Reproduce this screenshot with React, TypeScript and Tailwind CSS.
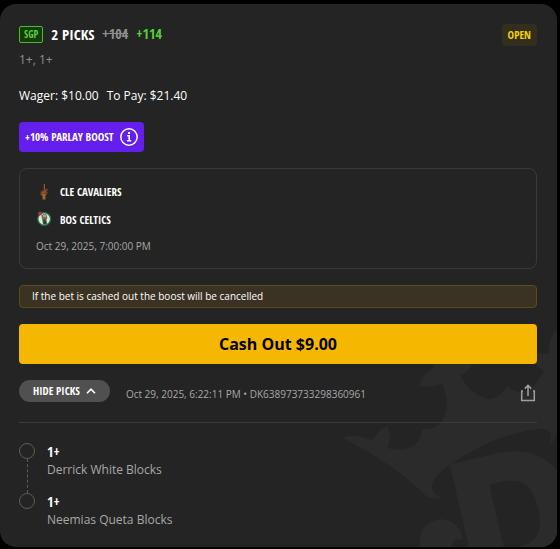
import type { ReactNode } from "react";

const condensed = "font-['Open_Sans_Condensed','Liberation_Sans_Narrow','Roboto_Condensed',sans-serif] font-bold";

const teams = [
  { name: "CLE CAVALIERS", logo: <CavaliersLogo /> },
  { name: "BOS CELTICS", logo: <CelticsLogo /> },
];

const picks = [
  { line: "1+", market: "Derrick White Blocks" },
  { line: "1+", market: "Neemias Queta Blocks" },
];

function CavaliersLogo() {
  return (
    <svg viewBox="0 0 16 18" className="h-[18px] w-4" aria-hidden="true">
      <path d="M8.4 1v7" stroke="#8a6429" strokeWidth="1.2" />
      <path d="M4.6 8.4 7.6 6.6l4.4-.8-.4 2-2.6.4 2.8.8-.8 2.6-3.2 1.8-3.4-1.4z" fill="#7b3a2c" />
      <path d="M5.6 10.2 10.6 8M5.4 11.8l4.4-.6" stroke="#a7713a" strokeWidth=".8" />
      <path d="M8 11.6v5" stroke="#9a7028" strokeWidth="2.8" />
    </svg>
  );
}

function CelticsLogo() {
  return (
    <svg viewBox="0 0 16 18" className="h-[18px] w-4" aria-hidden="true">
      <circle cx="8.2" cy="8" r="6.4" fill="#dfe5e0" stroke="#1c6f48" strokeWidth="1.3" />
      <path d="M5.4 4.4 8 2.6l2.6 1 .8 3.4-1 1.6 1 4.6H7l-.8-4.4z" fill="#5e7450" />
      <path d="M7 3.6h3.4v2.6H7z" fill="#b99a77" />
      <path d="M7.4 8.4h2.2l.6 5H7.6z" fill="#26402d" />
      <circle cx="4" cy="2.6" r="2" fill="#a03a34" />
    </svg>
  );
}

function InfoIcon() {
  return (
    <svg viewBox="0 0 18 18" className="size-[18px]" fill="none" stroke="#fff" aria-hidden="true">
      <circle cx="9" cy="9" r="8.2" strokeWidth="1.5" />
      <path d="M7.2 7.8h2v5M7 12.8h4.2" strokeWidth="1.6" />
      <path d="M8.1 5h2" strokeWidth="2" />
    </svg>
  );
}

function ShareIcon() {
  return (
    <svg viewBox="0 0 18 18" className="size-[18px]" fill="none" stroke="#a0a0a0" strokeWidth="1.5" aria-hidden="true">
      <path d="M4 7H2.7v9.6h12.6V7H14" />
      <path d="M9 12V1.8M5.8 4.6 9 1.4l3.2 3.2" />
    </svg>
  );
}

// Crown watermark in the lower right corner of the card
function CrownWatermark() {
  return (
    <svg
      viewBox="340 330 217 217"
      className="pointer-events-none absolute right-0 bottom-0 size-[217px]"
      fill="#2b2b2b"
      aria-hidden="true"
    >
      <path d="M343 438Q352 433 372 440Q379 430 387 426Q393 437 387 448Q405 453 416 444Q423 438 421 429Q436 431 443 420Q451 402 442 384Q430 388 419 386Q423 373 435 367L430 361L475 361Q468 373 460 375Q471 396 490 399Q501 397 507 386Q517 396 530 389Q538 383 544 370Q533 367 534 353L549 354Q548 338 557 330V432Q554 443 549 444Q550 440 551 434Q548 428 537 429Q510 432 480 447Q435 470 432 485Q431 494 441 497Q435 502 425 495Q395 465 343 438Z" />
      <path d="M420 547Q418 522 441 519Q460 521 463 540Q453 537 451 547Z" />
      <text
        x="0"
        y="0"
        transform="translate(470 588) rotate(-13)"
        fontSize="172"
        className="font-['Inter',sans-serif] font-black"
      >
        D
      </text>
    </svg>
  );
}

function Outcome({ line, market, last }: { line: string; market: string; last: boolean }) {
  return (
    <li className="flex gap-3">
      <div className="flex flex-col items-center">
        <span className="size-4 rounded-full border border-[#5c5c5c]" />
        {!last && <span className="flex-1 border-l border-dashed border-[#5c5c5c]" />}
      </div>
      <div className={last ? "" : "pb-3.5"}>
        <p className={`${condensed} text-sm leading-[18px] text-white`}>{line}</p>
        <p className="text-xs leading-[18px] text-[#a8a8a8]">{market}</p>
      </div>
    </li>
  );
}

function Tag({ className, children }: { className: string; children: ReactNode }) {
  return <span className={`${condensed} flex items-center ${className}`}>{children}</span>;
}

export default function App() {
  return (
    <div className="min-h-screen bg-black pt-1 pr-[3px] pb-0.5 font-['Open_Sans','Noto_Sans',sans-serif]">
      <article className="relative overflow-hidden rounded-2xl bg-[#242424] pt-5 pr-5 pb-[18px] pl-[19px]">
        <CrownWatermark />
        <div className="relative">
          <header className="flex items-start justify-between">
            <div>
              <div className="flex h-5 items-center gap-2">
                <Tag className="h-[17px] rounded-xs border border-[#45c02d] bg-[#163a0c] px-1 text-[10px] text-[#53d337]">
                  SGP
                </Tag>
                <h1 className={`${condensed} text-[15px] leading-5 text-white`}>2 PICKS</h1>
                <s className={`${condensed} text-sm leading-5 text-[#8f8f8f]`}>+104</s>
                <span className={`${condensed} text-sm leading-5 text-[#53d337]`}>+114</span>
              </div>
              <p className="mt-[7px] text-xs leading-[18px] text-[#8f8f8f]">1+, 1+</p>
            </div>
            <Tag className="h-[22px] rounded-sm bg-[#332f1f] px-1.5 text-[11px] text-[#f5d000]">OPEN</Tag>
          </header>

          <p className="mt-[18px] flex gap-2 text-xs leading-[18px] text-white">
            <span>Wager: $10.00</span>
            <span>To Pay: $21.40</span>
          </p>

          <button
            type="button"
            className={`${condensed} mt-[17px] flex h-[30px] items-center gap-1.5 rounded-sm bg-[#641fee] px-1.5 text-[11px] text-white`}
          >
            +10% PARLAY BOOST
            <InfoIcon />
          </button>

          <section className="mt-4 rounded-lg border border-[#3a3a3a] px-4 pt-3.5 pb-[13px]">
            <ul className="flex flex-col gap-2.5">
              {teams.map((team) => (
                <li key={team.name} className="flex h-[18px] items-center gap-2">
                  {team.logo}
                  <span className={`${condensed} text-[11px] leading-[18px] text-white`}>{team.name}</span>
                </li>
              ))}
            </ul>
            <time className="mt-2 block text-[10px] leading-[18px] text-[#a8a8a8]">Oct 29, 2025, 7:00:00 PM</time>
          </section>

          <p className="mt-4 rounded-sm border border-[#5a4d18] bg-[#3a3222] px-3 text-[10px] leading-[21px] text-white">
            If the bet is cashed out the boost will be cancelled
          </p>

          <button type="button" className="mt-4 h-10 w-full rounded-sm bg-[#f6b700] text-base font-bold text-black">
            Cash Out $9.00
          </button>

          <div className="mt-4 flex items-start">
            <button
              type="button"
              className={`${condensed} flex h-[22px] shrink-0 items-center gap-1.5 rounded-full bg-[#505050] px-3.5 text-[11px] text-white`}
            >
              HIDE PICKS
              <svg viewBox="0 0 10 6" className="h-1.5 w-2.5" fill="none" stroke="#fff" strokeWidth="1.6" aria-hidden="true">
                <path d="M1 5.2 5 1.2l4 4" />
              </svg>
            </button>
            <p className="mt-[5px] ml-4 flex-1 text-[10px] leading-[18px] text-[#a8a8a8]">
              Oct 29, 2025, 6:22:11 PM • DK638973733298360961
            </p>
            <button type="button" aria-label="Share" className="mt-1">
              <ShareIcon />
            </button>
          </div>

          <ul className="mt-[19px] border-t border-[#3a3a3a] pt-5">
            {picks.map((pick, i) => (
              <Outcome key={pick.market} {...pick} last={i === picks.length - 1} />
            ))}
          </ul>
        </div>
      </article>
    </div>
  );
}
